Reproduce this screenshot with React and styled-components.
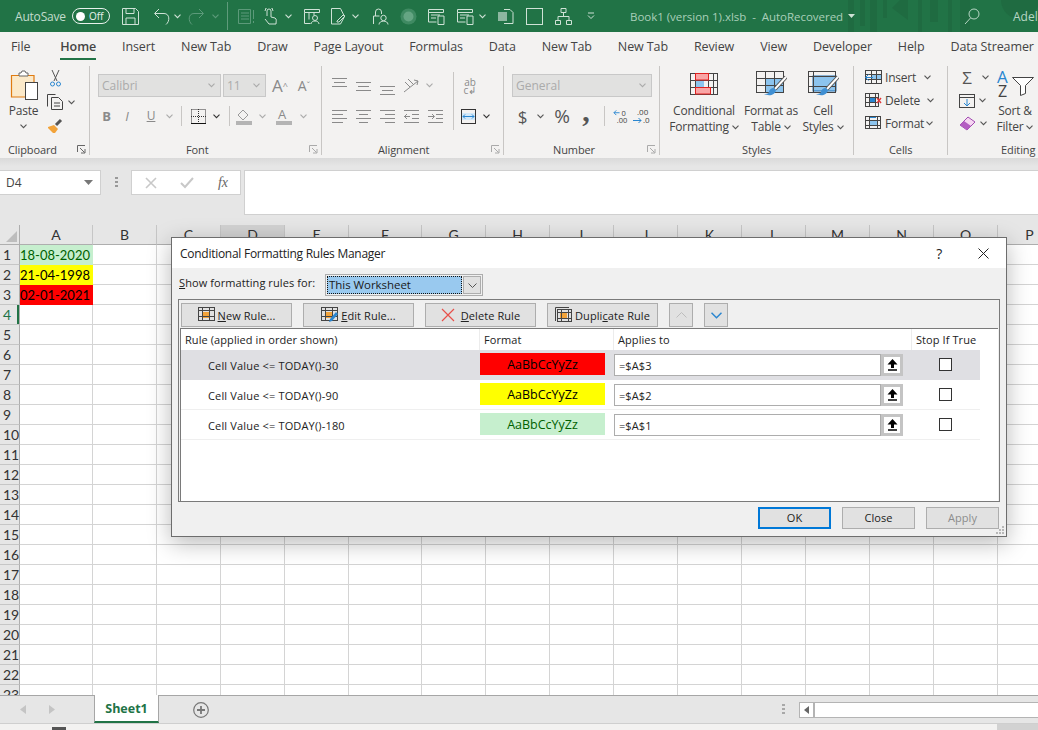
import React from 'react';
import styled, { createGlobalStyle } from 'styled-components';

const Global = createGlobalStyle`
  html, body { margin: 0; padding: 0; background: #fff; }
  #root { width: 1038px; height: 730px; }
  * { box-sizing: border-box; }
`;
const UI = `"Open Sans", "Noto Sans", sans-serif`;

const App_ = styled.div`
  position: relative; width: 1038px; height: 730px; overflow: hidden;
  display: flex; flex-direction: column; font-family: ${UI}; color: #333;
`;
/* ---------- title bar ---------- */
const TitleBar = styled.header`
  position: relative; height: 32px; flex: none; background: #217346; display: flex; align-items: center; padding-left: 15px; overflow: hidden;
`;
const Decor = styled.svg`position: absolute; right: 0; top: 0;`;
const AutoLabel = styled.span`width: 57px; font-size: 12px; letter-spacing: -.2px; color: #c3dccd;`;
const Toggle = styled.div`
  width: 38px; height: 16px; border: 1px solid #e8f1ec; border-radius: 8px; display: flex; align-items: center; gap: 4px; padding-left: 3px;
  color: #e8f1ec; font-size: 10px;
  &::before { content: ""; width: 9px; height: 9px; border-radius: 50%; background: #fff; }
`;
const Slot = styled.span`
  flex: none; width: ${p => p.$w}px; display: flex; align-items: center; justify-content: center; position: relative; z-index: 1;
`;
const QatDivider = styled.span`width: 1px; height: 28px; background: #5f9b7b;`;
const DocTitle = styled.span`
  position: relative; z-index: 1; margin-left: 30px; width: 225px; white-space: nowrap; font-size: 11.5px; letter-spacing: -.03px; color: #a9cfb9; display: flex; align-items: center; gap: 5px;
`;
const User = styled.span`position: relative; z-index: 1; font-size: 12px; color: #b7d6c4; margin-left: 33px; white-space: nowrap;`;
/* ---------- tabs ---------- */
const TabRow = styled.nav`
  height: 28px; flex: none; background: #f3f2f1; display: flex; gap: 25.95px; padding-left: 11px; align-items: stretch; white-space: nowrap; overflow: hidden;
`;
const Tab = styled.span`
  font-size: 12.5px; letter-spacing: -.1px; line-height: 30px; color: #444; position: relative; font-weight: ${p => p.$on ? 600 : 400};
  ${p => p.$on ? `margin-left: 4px; &::after { content: ""; position: absolute; left: 0; right: 0; bottom: -1px; height: 3px; background: #217346; }` : ''}
`;
/* ---------- ribbon ---------- */
const Ribbon = styled.section`
  height: 98px; flex: none; background: #f3f2f1; display: flex; padding-top: 6px; overflow: hidden;
`;
const Group = styled.div`
  flex: none; width: ${p => p.$w}px; height: 89px; display: flex; flex-direction: column; ${p => p.$last ? '' : 'border-right: 1px solid #c8c6c4;'}
  position: relative;
`;
const GroupBody = styled.div`
  height: 74px; flex: none; display: flex; padding-left: ${p => p.$pl || 0}px; padding-top: ${p => p.$pt || 0}px; flex-direction: ${p => p.$col ? 'column' : 'row'};
  gap: ${p => p.$gap || 0}px; white-space: nowrap;
`;
const LabelRow = styled.div`
  height: 14px; flex: none; margin-top: 2px; display: flex; align-items: center; padding-left: ${p => p.$pl}px; font-size: 11px; letter-spacing: -.1px; color: #444;
`;
const Launcher = styled.svg`margin-left: auto; margin-right: 3px;`;
const Row = styled.div`display: flex; align-items: center; height: ${p => p.$h || 18}px; flex: none;`;
const DisabledBox = styled.div`
  flex: none; width: ${p => p.$w}px; height: 23px; background: #e1e1e0; border: 1px solid #c8c8c8; display: flex; align-items: center; justify-content: space-between;
  padding: 0 5px 0 3px; color: #ababab; font-size: 12px; margin-right: ${p => p.$mr || 0}px;
`;
const Glyph = styled.span`
  font-size: ${p => p.$s || 13}px; font-weight: ${p => p.$b ? 700 : 400}; font-style: ${p => p.$i ? 'italic' : 'normal'};
  color: ${p => p.$c || '#555'}; line-height: 1; font-family: ${p => p.$serif ? '"Liberation Serif", serif' : UI};
  text-decoration: ${p => p.$u ? 'underline' : 'none'}; margin-top: ${p => p.$mt || 0}px;
`;
const StackGlyph = styled(Glyph)`line-height: 8px; text-align: center;`;
const VRule = styled.span`
  width: 1px; height: ${p => p.$h || 20}px; background: #c8c6c4; flex: none; margin-top: ${p => p.$mt || 0}px; margin-left: ${p => p.$ml || 0}px;
`;
const BigCol = styled.div`
  flex: none; width: ${p => p.$w}px; display: flex; flex-direction: column; align-items: center; padding-top: ${p => p.$pt ?? 7}px;
`;
const BigIcon = styled.div`height: ${p => p.$h || 22}px; display: flex; align-items: center; justify-content: center;`;
const BigText = styled.div`
  margin-top: ${p => p.$mt ?? 8}px; font-size: 12px; letter-spacing: -.2px; line-height: 16px; color: #444; text-align: center; white-space: nowrap;
`;
const TextLine = styled.div`display: flex; align-items: center; justify-content: center; gap: 3px;`;
const CellLabel = styled.span`font-size: 12px; letter-spacing: -.2px; color: #444; width: ${p => p.$w}px; margin-left: 3px;`;
const ColStack = styled.div`display: flex; flex-direction: column; flex: none;`;
/* ---------- formula bar ---------- */
const FormulaBar = styled.section`
  height: 67px; flex: none; background: linear-gradient(#dadada, #e6e6e6 8px); display: flex; padding-top: 12px; align-items: flex-start;
`;
const NameBox = styled.div`
  width: 101px; height: 25px; background: #fff; border: 1px solid #d0d0d0; border-left: 0; display: flex; align-items: center; justify-content: space-between; padding: 0 7px 0 6px; font-size: 12px; color: #444;
`;
const VDots = styled.div`width: 30px; height: 25px; display: flex; align-items: center; justify-content: center;`;
const FxBox = styled.div`
  width: 110px; height: 25px; background: #fff; border: 1px solid #d0d0d0; display: flex; align-items: center; margin-right: 3px;
`;
const FormulaInput = styled.div`flex: 1; height: 45px; background: #fff; border: 1px solid #d0d0d0; border-right: 0;`;
/* ---------- grid ---------- */
const Sheet = styled.main`
  height: 471px; flex: none; overflow: hidden; display: grid; background: #fff;
  grid-template-columns: 20px 73px 64px 64px 64px 64px 73px repeat(9, 64px) 64px;
  grid-auto-rows: 20px; font-family: "Lato", sans-serif;
`;
const Corner = styled.div`
  background: #e6e6e6; border-right: 1px solid #aeaeae; border-bottom: 1px solid #aeaeae; position: relative;
  &::after { content: ""; position: absolute; right: 2px; bottom: 2px; border-left: 11px solid transparent; border-bottom: 11px solid #bdbdbd; }
`;
const ColHead = styled.div`
  background: ${p => p.$on ? '#d2d2d2' : '#e6e6e6'}; border-right: 1px solid #c6c6c6; border-bottom: 1px solid #aeaeae; font-size: 14px; color: #333; text-align: center; line-height: 20px;
`;
const RowHead = styled.div`
  background: #e6e6e6; border-right: 1px solid #aeaeae; border-bottom: 1px solid #c6c6c6; font-size: 14px; color: ${p => p.$on ? '#217346' : '#333'}; line-height: 20px; padding-left: 3px;
  ${p => p.$on ? 'box-shadow: inset -2px 0 #217346;' : ''}
`;
const Cell = styled.div`
  background: ${p => p.$bg || '#fff'}; color: ${p => p.$fg || '#000'}; border-right: 1px solid ${p => p.$bg || '#d4d4d4'}; border-bottom: 1px solid ${p => p.$bg || '#d4d4d4'};
  font-size: 13px; line-height: 20px; text-align: right; padding-right: 2px; white-space: nowrap;
`;
/* ---------- bottom ---------- */
const TabsBar = styled.section`
  height: 29px; flex: none; background: #e6e6e6; border-top: 1px solid #a6a6a6; border-bottom: 1px solid #cfcfcf; display: flex; align-items: stretch; margin-top: -1px; position: relative; z-index: 2;
`;
const SheetTab = styled.div`
  width: 65px; margin-top: -1px; background: #fff; border-left: 1px solid #a6a6a6; border-right: 1px solid #a6a6a6; border-bottom: 2px solid #217346;
  color: #217346; font-weight: 700; font-size: 12.5px; text-align: center; line-height: 27px;
`;
const ScrollTrack = styled.div`
  margin-top: 6px; height: 16px; flex: 1; background: #fff; border: 1px solid #b4b4b4; border-right: 0; display: flex;
`;
const ScrollBtn = styled.div`width: 15px; border-right: 2px solid #b4b4b4; display: flex; align-items: center; justify-content: center;`;
const Status = styled.footer`flex: 1; background: #f3f2f1; display: flex; justify-content: space-between; padding-left: 52px;`;
const StatusGlyph = styled.div`width: 14px; height: 3px; margin-top: 3px; background: #555;`;
const StatusOn = styled.div`width: 41px; background: #d2d2d2;`;
/* ---------- dialog ---------- */
const Dialog = styled.section`
  position: absolute; left: 171px; top: 237px; width: 836px; height: 300px; z-index: 5; background: #f0f0f0; border: 1px solid #6d6d6d;
  box-shadow: 0 6px 22px rgba(0,0,0,.28); display: flex; flex-direction: column; color: #222; font-size: 11px; letter-spacing: .08px;
`;
const DlgTitle = styled.div`
  height: 30px; flex: none; background: #fff; display: flex; align-items: center; padding-left: 8px; font-size: 12px; color: #222; letter-spacing: -.27px;
`;
const DlgHelp = styled.span`margin-left: auto; font-size: 14px; margin-right: 36px;`;
const DlgClose = styled.svg`margin-right: 17px;`;
const DlgBody = styled.div`flex: 1; padding: 0 6px; display: flex; flex-direction: column; min-height: 0;`;
const ShowRow = styled.div`height: 31px; flex: none; display: flex; align-items: center; padding-left: 1px; padding-top: 3px;`;
const ShowLabel = styled.span`width: 146px; margin-top: -5px;`;
const U = styled.span`text-decoration: underline;`;
const Select = styled.div`
  width: 158px; height: 22px; border: 1px solid #adadad; padding: 1px; display: flex; background: #f0f0f0;
`;
const SelectValue = styled.div`
  flex: 1; background: #99c9ef; border: 1px dotted #111; font-size: 11.5px; line-height: 15px; letter-spacing: -.05px; padding-left: 1px; color: #1a1a1a;
`;
const SelectBtn = styled.div`width: 18px; margin-left: 1px; background: #e1e1e1; border: 1px solid #adadad; display: flex; align-items: center; justify-content: center;`;
const Panel = styled.div`
  height: 203px; flex: none; border: 1px solid #7a7a7a; padding: 3px 1px 0 1px; display: flex; flex-direction: column;
`;
const Tools = styled.div`display: flex; gap: 11px; padding-left: 1px; height: 25px; flex: none;`;
const ToolBtn = styled.div`
  width: ${p => p.$w || 111}px; height: 24px; background: #e1e1e1; border: 1px solid #adadad; display: flex; align-items: center; justify-content: center; gap: 3px; white-space: nowrap; color: #222;
`;
const DelLabel = styled.span`margin-left: 3px;`;
const List = styled.div`flex: 1; background: #fff; border-top: 1px solid #7a7a7a; border-left: 1px solid #7a7a7a;`;
const ListGrid = styled.div`width: 799px; display: grid; grid-template-columns: 299px 134px 298px 68px;`;
const Th = styled.div`
  height: 21px; line-height: 21px; padding-left: ${p => p.$pl ?? 4}px; border-right: ${p => p.$nr ? 0 : '1px solid #ececec'}; white-space: nowrap; color: #222;
`;
const Td = styled.div`
  height: 30px; display: flex; align-items: center; background: ${p => p.$sel ? '#dfdfe3' : '#fff'}; border-bottom: 1px solid ${p => p.$sel ? '#dfdfe3' : '#efefef'};
  padding-left: ${p => p.$pl || 0}px; white-space: nowrap; letter-spacing: ${p => p.$pl ? '.16px' : 'inherit'};
  padding-top: ${p => p.$pl ? 1 : 0}px;
`;
const Swatch = styled.div`
  width: 125px; height: 22px; background: ${p => p.$bg}; color: ${p => p.$fg}; font-size: 12.5px; letter-spacing: 0; line-height: 24px; text-align: center; margin-bottom: 1px;
`;
const RefWrap = styled.div`width: 289px; height: 22px; display: flex;`;
const RefInput = styled.div`flex: 1; background: #fff; border: 1px solid #adadad; padding-left: 4px; line-height: 21px;`;
const RefBtn = styled.div`width: 22px; background: #fff; border: 3px solid #c4c4c4; display: flex; align-items: center; justify-content: center;`;
const Check = styled.div`width: 13px; height: 13px; background: #fff; border: 1px solid #333; margin-left: 27px; margin-bottom: 1px;`;
const Foot = styled.div`flex: 1; display: flex; justify-content: flex-end; gap: 11px; padding: 5px 1px 0 0;`;
const FootBtn = styled.div`
  width: 73px; height: 22px; background: #e1e1e1; text-align: center; font-size: 11px; line-height: ${p => p.$def ? 18 : 20}px; color: ${p => p.$off ? '#8c8c8c' : '#222'};
  border: ${p => p.$def ? '2px solid #0078d7' : '1px solid #adadad'};
`;
const Grip = styled.svg`position: absolute; right: 1px; bottom: 1px;`;

/* ---------- icons ---------- */
const Chev = ({ c = '#555' }) => <svg width="7" height="5" viewBox="0 0 7 5"><path d="M.5 .7 3.5 3.7 6.5 .7" fill="none" stroke={c} strokeWidth="1.1" /></svg>;
const Qat = ({ w = 17, h = 17, c = '#cfe2d6', children }) => <svg width={w} height={h} viewBox={`0 0 ${w} ${h}`} fill="none" stroke={c} strokeWidth="1">{children}</svg>;
const QC = '#cfe2d6', QD = '#5c9a7a';

const LaunchIco = ({ c = '#666' }) => (
  <Launcher width="9" height="9" viewBox="0 0 9 9" fill="none" stroke={c}><path d="M.5 7V.5H8M3 3l4.500 4.500M4 8h4V4" /></Launcher>
);
const Lines = ({ kind = 'left' }) => {
  const rows = [[1.5, 0], [5.5, 1], [9.5, 0], [13.5, 1]];
  return (
    <svg width="15" height="15" viewBox="0 0 15 15" stroke="#8a8a8a">
      {rows.map(([y, odd], i) => {
        const l = odd ? 3 : 0, r = odd ? 12 : 15;
        return <path key={i} d={`M${kind === 'right' ? (odd ? 5 : 0) : kind === 'center' ? l : 0} ${y}H${kind === 'left' ? (odd ? 11 : 15) : kind === 'center' ? r : 15}`} />;
      })}
    </svg>
  );
};
const VAlign = ({ pos }) => {
  const off = pos === 'top' ? 0 : pos === 'mid' ? 4 : 8;
  return <svg width="15" height="18" viewBox="0 0 15 18" stroke="#8a8a8a"><path d={`M0 ${off + 1.5}H15M2 ${off + 5.5}H13M0 ${off + 9.5}H15`} /></svg>;
};
const GridOutline = ({ w, h, xs, ys, c = '#444' }) => (
  <g stroke={c} fill="none">
    <rect x=".5" y=".5" width={w - 1} height={h - 1} />
    {xs.map(x => <path key={x} d={`M${x}.5 0V${h}`} />)}
    {ys.map(y => <path key={y} d={`M0 ${y}.5H${w}`} />)}
  </g>
);
const Brush = () => (
  <g>
    <path d="M30 6 19 18" stroke="#555" strokeWidth="4" />
    <path d="M30 6 19 18" stroke="#fff" strokeWidth="2" />
    <path d="M18 17c-3 0-5 2-5 4-1 2-3 2-5 2 4 2 11 2 12-4z" fill="#3f8fd2" />
  </g>
);
const Paste = () => (
  <svg width="28" height="31" viewBox="0 0 28 31" fill="none">
    <path d="M1.500 5.500H24V27H1.500z" fill="#fbe9c9" stroke="#e07b10" strokeWidth="1.200" />
    <path d="M9 5.500V3h2l1-2h3l1 2h2v3H9z" fill="#fff" stroke="#666" />
    <rect x="15.500" y="12.500" width="12" height="17" fill="#fff" stroke="#444" />
  </svg>
);
const CondIco = () => (
  <svg width="28" height="22" viewBox="0 0 28 22">
    <rect x="5" y="7" width="9" height="7" fill="#8cc4ee" />
    <GridOutline w={28} h={22} xs={[5, 18, 23]} ys={[7, 14]} />
    <rect x="5.500" y=".5" width="13" height="6.500" fill="#f9a5a5" stroke="#e02020" />
    <rect x="5.500" y="14.500" width="15" height="6.500" fill="#f9a5a5" stroke="#e02020" />
  </svg>
);
const TableIco = () => (
  <svg width="31" height="26" viewBox="0 0 31 26">
    <rect x="10" y="7" width="17" height="15" fill="#8cc4ee" />
    <GridOutline w={28} h={22} xs={[9, 18]} ys={[7, 14]} />
    <Brush />
  </svg>
);
const CellStyleIco = () => (
  <svg width="31" height="26" viewBox="0 0 31 26">
    <rect x="5" y="5" width="23" height="15" fill="#8cc4ee" stroke="#2272b6" />
    <GridOutline w={28} h={22} xs={[5]} ys={[5, 15]} />
    <Brush />
  </svg>
);
const CellIco = ({ kind }) => (
  <svg width="17" height="15" viewBox="0 0 17 15">
    {kind === 'ins' && <>
      <rect x="6" y="5" width="10" height="5" fill="#8cc4ee" />
      <GridOutline w={17} h={14} xs={[6, 11]} ys={[4, 9]} />
      <path d="M8 7.500H.8M3.500 4.500l-3 3 3 3" stroke="#2a86d0" fill="none" />
    </>}
    {kind === 'del' && <>
      <rect x="5" y="5" width="6" height="5" fill="#2a86d0" />
      <GridOutline w={14} h={14} xs={[4, 10]} ys={[4, 9]} />
      <path d="M12 5l4 5m0-5-4 5" stroke="#e03838" strokeWidth="1.400" />
    </>}
    {kind === 'fmt' && <>
      <rect x="5" y="5" width="7" height="5" fill="#8cc4ee" />
      <GridOutline w={16} h={13} xs={[4, 12]} ys={[4, 9]} />
      <path d="M5 1.500H11" stroke="#2a86d0" />
    </>}
  </svg>
);
const FillDown = () => (
  <svg width="16" height="14" viewBox="0 0 16 14" fill="none"><rect x=".5" y=".5" width="15" height="13" stroke="#444" /><path d="M0 3.500H16" stroke="#444" /><path d="M8 5v7M5 9l3 3 3-3" stroke="#2a86d0" /></svg>
);
const Eraser = () => (
  <svg width="17" height="15" viewBox="0 0 17 15"><path d="M1 9 9 1l7 5-8 8z" fill="#f6d6f2" stroke="#a04bb0" /><path d="M1 9l4-4 7 5-4 4z" fill="#b45cc2" /></svg>
);
const SortIco = () => (
  <svg width="40" height="28" viewBox="0 0 40 28">
    <text x="2" y="14" fontFamily="Open Sans" fontSize="17" fill="#2a86d0">A</text>
    <text x="3" y="28" fontFamily="Open Sans" fontSize="16" fill="#444">Z</text>
    <path d="M17.500 8.500h21l-8 8v8l-5 2v-10z" fill="#fff" stroke="#444" />
  </svg>
);
const RuleIco = ({ kind }) => (
  <svg width="17" height="17" viewBox="0 0 17 17">
    <rect x="5" y="5" width="7" height="6" fill="#f2a33a" />
    {kind === 'dup' && <path d="M.5 14V.5H14" stroke="#444" fill="none" />}
    <g transform={kind === 'dup' ? 'translate(2 2)' : ''}>
      <GridOutline w={kind === 'dup' ? 15 : 17} h={kind === 'dup' ? 13 : 14} xs={[4, 11]} ys={[3, 9]} />
    </g>
    {kind === 'edit' && <path d="M8 15l1-3 6-7 2 2-6 7z" fill="#2a86d0" />}
  </svg>
);

const cols = ['A','B','C','D','E','F','G','H','I','J','K','L','M','N','O','P'];
const data = { 1: ['18-08-2020', '#c6efce', '#006100'], 2: ['21-04-1998', '#ffff00', '#000'], 3: ['02-01-2021', '#ff0000', '#000'] };
const rules = [
  ['Cell Value <= TODAY()-30', '#ff0000', '#000', '=$A$3', true],
  ['Cell Value <= TODAY()-90', '#ffff00', '#000', '=$A$2', false],
  ['Cell Value <= TODAY()-180', '#c6efce', '#006100', '=$A$1', false],
];
const tabs = ['File','Home','Insert','New Tab','Draw','Page Layout','Formulas','Data','New Tab','New Tab','Review','View','Developer','Help','Data Streamer'];

const UpArrow = () => <svg width="11" height="13" viewBox="0 0 11 13"><path d="M5.500 1 10.500 6.500H7V10H4V6.500H.5z" fill="#000" /><path d="M1 12h9" stroke="#000" strokeWidth="1.500" /></svg>;

export default function App() {
  return (
    <App_>
      <Global />
      <TitleBar>
        <Decor width="190" height="32" viewBox="0 0 190 32" fill="#1f6b41">
          <path d="M0 0h6v32H0zM12 0h5v26h-5zM22 0h7v32h-7zM35 0h4v18h-4zM44 8l8-8h8v20zM70 0h4v32h-4zM82 0h8v22h-8zM100 0h4v32h-4zM112 0h10v32h-10z" />
          <circle cx="172" cy="0" r="19" />
        </Decor>
        <AutoLabel>AutoSave</AutoLabel>
        <Toggle>Off</Toggle>
        <Slot $w={41}><Qat><path d="M.5.5h13l3 3v13H.5zM4 .5v5h8v-5M4 16.500V10h9v6.500" /></Qat></Slot>
        <Slot $w={22}><Qat w={19}><path d="M6 1 1.500 5.500 6 10M2 5.500h9c6 0 6 8 2 11" /></Qat></Slot>
        <Slot $w={8}><Chev c={QC} /></Slot>
        <Slot $w={28}><Qat w={19} c={QD}><path d="M13 1l4.500 4.500L13 10M17 5.500H8c-6 0-6 8-2 11" /></Qat></Slot>
        <Slot $w={12}><Chev c={QD} /></Slot>
        <Slot $w={12}><QatDivider /></Slot>
        <Slot $w={26}><Qat c={QD}><path d="M.5 1.500h12v14H.5zM3 5h8M3 8h8M3 11h8M15.500 2v9M15.500 13v2" /></Qat></Slot>
        <Slot $w={24}><Qat><path d="M4 8V3a2 2 0 0 1 4 0v6l4 1c2 1 1 3 1 6H6L2 11M2 3a4 4 0 0 1 8 0" /></Qat></Slot>
        <Slot $w={10}><Chev c={QC} /></Slot>
        <Slot $w={38}><Qat><path d="M.5 1.500h15v3H.5zM.5 4.500v11h6M5 4.500v7M10 4.500v3" /><circle cx="11" cy="10" r="2.500" /><path d="M7 16c0-4 8-4 8 0" /></Qat></Slot>
        <Slot $w={15}><Qat w={15}><path d="M.5.5h9l4 8-4 7.500h-9zM6 13l6-6 2 1-6 6H6z" /></Qat></Slot>
        <Slot $w={18}><Chev c={QC} /></Slot>
        <Slot $w={32}><Qat><path d="M1.500 16V8h6M3.500 8V4a3 3 0 0 1 6 0v2" /><circle cx="11.500" cy="10" r="2.700" /><path d="M7 16.500c0-4.500 9-4.500 9 0" /></Qat></Slot>
        <Slot $w={24}><svg width="17" height="17" viewBox="0 0 17 17"><circle cx="8.500" cy="8.500" r="8" fill="#3f8a62" /><circle cx="8.500" cy="8.500" r="5" fill="#65a583" /></svg></Slot>
        <Slot $w={32}><Qat><path d="M.5 1.500h15v3H.5zM.5 4.500V14h8M3 7h9M3 10h5M10 8h6v8.500h-6z" /></Qat></Slot>
        <Slot $w={26}><Qat><path d="M.5 1.500h15v3H.5zM.5 4.500V14h8M3 7h9M3 10h5M10 8h6v8.500h-6z" /></Qat></Slot>
        <Slot $w={8}><Chev c={QC} /></Slot>
        <Slot $w={38}><svg width="17" height="17" viewBox="0 0 17 17"><rect x="1" y="4" width="9" height="9" fill="#8db7a0" /><path d="M7 1.500h6l3 3v11H7" fill="none" stroke={QC} /></svg></Slot>
        <Slot $w={20}><Qat><rect x=".5" y=".5" width="16" height="16" /></Qat></Slot>
        <Slot $w={38}><Qat><path d="M6 .5h5v4H6zM.5 12.500h5v4h-5zM11.500 12.500h5v4h-5zM8.500 4.500v4M3 12.500v-4h11v4" /></Qat></Slot>
        <Slot $w={18}><svg width="8" height="8" viewBox="0 0 8 8" fill="none" stroke={QC}><path d="M1 1h6M1 3.500l3 3 3-3" /></svg></Slot>
        <DocTitle>Book1 (version 1).xlsb&nbsp; -&nbsp; AutoRecovered <svg width="7" height="4"><path d="M0 0h7L3.500 4z" fill="#cfe2d6" /></svg></DocTitle>
        <Slot $w={125}><svg style={{ marginLeft: 109 }} width="16" height="17" viewBox="0 0 16 17" fill="none" stroke="#b7d6c4"><circle cx="10" cy="6" r="5" /><path d="M6.500 10 1 16" /></svg></Slot>
        <User>Adel</User>
      </TitleBar>

      <TabRow>{tabs.map((t, i) => <Tab key={i} $on={t === 'Home'}>{t}</Tab>)}</TabRow>

      <Ribbon>
        <Group $w={90}>
          <GroupBody>
            <BigCol $w={47} $pt={4}>
              <BigIcon $h={31}><Paste /></BigIcon>
              <BigText $mt={2}>Paste</BigText>
              <Row $h={14}><Chev /></Row>
            </BigCol>
            <ColStack>
              <Row $h={24}><Slot $w={16}>
                <svg width="11" height="17" viewBox="0 0 11 17" fill="none"><path d="M2 0l5 11M9 0 4 11" stroke="#555" /><circle cx="2.500" cy="14" r="2" stroke="#2a86d0" /><circle cx="8.500" cy="14" r="2" stroke="#2a86d0" /></svg>
              </Slot></Row>
              <Row $h={24}><Slot $w={16}>
                <svg width="16" height="16" viewBox="0 0 16 16" fill="none" stroke="#444"><path d="M.5 12.500V.5h8M4.500 3.500h7l4 4v8h-11zM7 9h6M7 12h6" /></svg>
              </Slot><Slot $w={17}><Chev /></Slot></Row>
              <Row $h={24}><Slot $w={16}>
                <svg width="16" height="16" viewBox="0 0 16 16"><path d="M1 9l6-2 4 4-3 4H6L1 10z" fill="#f2a33a" /><path d="M9 7l5-5" stroke="#555" strokeWidth="3" /></svg>
              </Slot></Row>
            </ColStack>
          </GroupBody>
          <LabelRow $pl={8}>Clipboard<LaunchIco /></LabelRow>
        </Group>

        <Group $w={232}>
          <GroupBody $col $pl={8} $pt={8} $gap={10}>
            <Row $h={23}>
              <DisabledBox $w={123} $mr={2}>Calibri<Chev c="#aaa" /></DisabledBox>
              <DisabledBox $w={43}>11<Chev c="#aaa" /></DisabledBox>
              <Slot $w={28}><Glyph $s={17} $c="#8a8a8a">A</Glyph><Glyph $s={9} $c="#8a8a8a">^</Glyph></Slot>
              <Slot $w={20}><Glyph $s={14} $c="#8a8a8a">A</Glyph><Glyph $s={9} $c="#8a8a8a">ˇ</Glyph></Slot>
            </Row>
            <Row $h={18}>
              <Slot $w={17}><Glyph $b $s={13} $c="#8a8a8a">B</Glyph></Slot>
              <Slot $w={24}><Glyph $i $s={13} $c="#8a8a8a">I</Glyph></Slot>
              <Slot $w={24}><Glyph $u $s={12} $c="#8a8a8a">U</Glyph></Slot>
              <Slot $w={12}><Chev c="#aaa" /></Slot>
              <Slot $w={13}><VRule /></Slot>
              <Slot $w={20}><svg width="15" height="15" viewBox="0 0 15 15" fill="none"><path d="M.5.5h14v14M.5.5v14M7.500 0v14M0 7.500h15" stroke="#333" strokeDasharray="1 1" /><path d="M0 14.500h15" stroke="#111" /></svg></Slot>
              <Slot $w={17}><Chev c="#333" /></Slot>
              <Slot $w={9}><VRule /></Slot>
              <Slot $w={20}><svg width="16" height="17" viewBox="0 0 16 17"><path d="M2 7l5-5 5 5-5 5z" fill="none" stroke="#9a9a9a" /><rect y="13" width="16" height="4" fill="#b4b4b4" /></svg></Slot>
              <Slot $w={16}><Chev c="#aaa" /></Slot>
              <Slot $w={28}><svg width="16" height="17" viewBox="0 0 16 17"><text x="2" y="11" fontSize="13" fontFamily="Open Sans" fill="#8a8a8a">A</text><rect y="13" width="16" height="4" fill="#b4b4b4" /></svg></Slot>
              <Slot $w={10}><Chev c="#aaa" /></Slot>
            </Row>
          </GroupBody>
          <LabelRow $pl={96}>Font<LaunchIco c="#aaa" /></LabelRow>
        </Group>

        <Group $w={182}>
          <GroupBody $col $pl={5} $pt={8} $gap={10}>
            <Row $h={23}>
              <Slot $w={24}><VAlign pos="top" /></Slot>
              <Slot $w={24}><VAlign pos="mid" /></Slot>
              <Slot $w={24}><VAlign pos="bot" /></Slot>
              <Slot $w={24}><svg width="17" height="17" viewBox="0 0 17 17" fill="none" stroke="#8a8a8a"><path d="M1 15 15 4M11 3l4 1-1 4M2 5l5 5M5 2l5 5" /></svg></Slot>
              <Slot $w={12}><Chev c="#aaa" /></Slot>
              <Slot $w={28}><VRule $h={58} $mt={31} $ml={8} /></Slot>
              <Slot $w={14}><StackGlyph $s={10} $c="#8a8a8a">ab<br />c↲</StackGlyph></Slot>
            </Row>
            <Row $h={18}>
              <Slot $w={24}><Lines kind="left" /></Slot>
              <Slot $w={24}><Lines kind="center" /></Slot>
              <Slot $w={24}><Lines kind="right" /></Slot>
              <Slot $w={24}><svg width="15" height="13" viewBox="0 0 15 13" stroke="#8a8a8a" fill="none"><path d="M0 .5h15M8 4.500h7M8 8.500h7M0 12.500h15M6 6.500H0M3 4 .5 6.500 3 9" /></svg></Slot>
              <Slot $w={24}><svg width="15" height="13" viewBox="0 0 15 13" stroke="#8a8a8a" fill="none"><path d="M0 .5h15M8 4.500h7M8 8.500h7M0 12.500h15M0 6.500h6M4 4l2.500 2.500L4 9" /></svg></Slot>
              <Slot $w={14} />
              <Slot $w={15}><svg width="15" height="15" viewBox="0 0 15 15" fill="none"><rect x=".5" y=".5" width="14" height="14" stroke="#333" /><rect x="1" y="4" width="13" height="7" fill="#d2e8f8" /><path d="M2 7.500h11M4 5.500l-2 2 2 2M11 5.500l2 2-2 2" stroke="#2a86d0" /></svg></Slot>
              <Slot $w={20}><Chev c="#333" /></Slot>
            </Row>
          </GroupBody>
          <LabelRow $pl={56}>Alignment<LaunchIco c="#aaa" /></LabelRow>
        </Group>

        <Group $w={156}>
          <GroupBody $col $pl={8} $pt={8} $gap={10}>
            <Row $h={23}><DisabledBox $w={140}>General<Chev c="#aaa" /></DisabledBox></Row>
            <Row $h={18}>
              <Slot $w={21}><Glyph $s={17}>$</Glyph></Slot>
              <Slot $w={15}><Chev /></Slot>
              <Slot $w={28}><Glyph $s={19}>%</Glyph></Slot>
              <Slot $w={20}><Glyph $s={30} $b $serif $mt={-10}>,</Glyph></Slot>
              <Slot $w={17}><VRule /></Slot>
              <Slot $w={16}><svg width="17" height="15" viewBox="0 0 17 15"><path d="M7 3.500H1M3.500 1 1 3.500 3.500 6" stroke="#2a86d0" fill="none" /><text x="9" y="7" fontSize="8" fontFamily="Open Sans" fill="#444">0</text><text x="4" y="14" fontSize="8" fontFamily="Open Sans" fill="#444">.00</text></svg></Slot>
              <Slot $w={25}><svg width="17" height="15" viewBox="0 0 17 15"><text x="4" y="6" fontSize="8" fontFamily="Open Sans" fill="#444">.00</text><text x="10" y="14" fontSize="8" fontFamily="Open Sans" fill="#444">.0</text><path d="M0 11.500h8M5.500 9 8 11.500 5.500 14" stroke="#2a86d0" fill="none" /></svg></Slot>
            </Row>
          </GroupBody>
          <LabelRow $pl={49}>Number<LaunchIco c="#aaa" /></LabelRow>
        </Group>

        <Group $w={194}>
          <GroupBody $pl={6}>
            <BigCol $w={76}><BigIcon><CondIco /></BigIcon><BigText>Conditional<TextLine>Formatting <Chev /></TextLine></BigText></BigCol>
            <BigCol $w={58}><BigIcon><TableIco /></BigIcon><BigText>Format as<TextLine>Table <Chev /></TextLine></BigText></BigCol>
            <BigCol $w={46}><BigIcon><CellStyleIco /></BigIcon><BigText>Cell<TextLine>Styles <Chev /></TextLine></BigText></BigCol>
          </GroupBody>
          <LabelRow $pl={82}>Styles</LabelRow>
        </Group>

        <Group $w={94}>
          <GroupBody $col $pl={11}>
            <Row $h={23}><CellIco kind="ins" /><CellLabel $w={39}>Insert</CellLabel><Chev /></Row>
            <Row $h={23}><CellIco kind="del" /><CellLabel $w={42}>Delete</CellLabel><Chev /></Row>
            <Row $h={23}><CellIco kind="fmt" /><CellLabel $w={41}>Format</CellLabel><Chev /></Row>
          </GroupBody>
          <LabelRow $pl={35}>Cells</LabelRow>
        </Group>

        <Group $w={110} $last>
          <GroupBody $pl={11}>
            <ColStack>
              <Row $h={23}><Slot $w={16}><Glyph $s={17}>Σ</Glyph></Slot><Slot $w={20}><Chev /></Slot></Row>
              <Row $h={23}><FillDown /><Slot $w={14}><Chev /></Slot></Row>
              <Row $h={23}><Eraser /><Slot $w={14}><Chev /></Slot></Row>
            </ColStack>
            <BigCol $w={40} $pt={3}>
              <BigIcon $h={28}><SortIco /></BigIcon>
              <BigText $mt={6}>Sort &amp;<TextLine>Filter <Chev /></TextLine></BigText>
            </BigCol>
          </GroupBody>
          <LabelRow $pl={53}>Editing</LabelRow>
        </Group>
      </Ribbon>

      <FormulaBar>
        <NameBox>D4<svg width="9" height="5"><path d="M0 0h9L4.500 5z" fill="#777" /></svg></NameBox>
        <VDots><svg width="3" height="11" fill="#999"><rect width="3" height="2" /><rect y="4" width="3" height="2" /><rect y="8" width="3" height="2" /></svg></VDots>
        <FxBox>
          <Slot $w={37}><svg width="12" height="12" fill="none" stroke="#c8c8c8" strokeWidth="1.600"><path d="M1 1l10 10M11 1 1 11" /></svg></Slot>
          <Slot $w={36}><svg width="14" height="12" fill="none" stroke="#c8c8c8" strokeWidth="2"><path d="M1 6l4 4 8-9" /></svg></Slot>
          <Slot $w={36}><Glyph $serif $i $s={14} $c="#666">fx</Glyph></Slot>
        </FxBox>
        <FormulaInput />
      </FormulaBar>

      <Sheet>
        <Corner />
        {cols.map(c => <ColHead key={c} $on={c === 'D'}>{c}</ColHead>)}
        {Array.from({ length: 23 }, (_, r) => r + 1).map(r => (
          <React.Fragment key={r}>
            <RowHead $on={r === 4}>{r}</RowHead>
            {cols.map((c, i) => {
              const d = i === 0 && data[r];
              return <Cell key={c} $bg={d ? d[1] : undefined} $fg={d ? d[2] : undefined}>{d ? d[0] : ''}</Cell>;
            })}
          </React.Fragment>
        ))}
      </Sheet>

      <TabsBar>
        <Slot $w={46}><svg width="6" height="9"><path d="M6 0v9L0 4.500z" fill="#c4c4c4" /></svg></Slot>
        <Slot $w={12}><svg width="6" height="9"><path d="M0 0v9l6-4.500z" fill="#c4c4c4" /></svg></Slot>
        <Slot $w={36} />
        <SheetTab>Sheet1</SheetTab>
        <Slot $w={83}><svg width="16" height="16" viewBox="0 0 16 16" fill="none" stroke="#777" strokeWidth="1.200"><circle cx="8" cy="8" r="7.300" /><path d="M8 4v8M4 8h8" strokeWidth="1.800" /></svg></Slot>
        <Slot $w={557}><svg width="3" height="11" fill="#a8a8a8" style={{ marginLeft: 526 }}><rect width="3" height="2" /><rect y="4" width="3" height="2" /><rect y="8" width="3" height="2" /></svg></Slot>
        <ScrollTrack><ScrollBtn><svg width="5" height="8"><path d="M5 0v8L0 4z" fill="#666" /></svg></ScrollBtn></ScrollTrack>
      </TabsBar>
      <Status><StatusGlyph /><StatusOn /></Status>

      <Dialog>
        <DlgTitle>
          Conditional Formatting Rules Manager
          <DlgHelp>?</DlgHelp>
          <DlgClose width="11" height="11" fill="none" stroke="#222"><path d="M.5.5l10 10M10.500.5l-10 10" /></DlgClose>
        </DlgTitle>
        <DlgBody>
          <ShowRow>
            <ShowLabel><U>S</U>how formatting rules for:</ShowLabel>
            <Select>
              <SelectValue>This Worksheet</SelectValue>
              <SelectBtn><svg width="9" height="5" fill="none" stroke="#555"><path d="M.5.5l4 4 4-4" /></svg></SelectBtn>
            </Select>
          </ShowRow>
          <Panel>
            <Tools>
              <ToolBtn><RuleIco /><span><U>N</U>ew Rule...</span></ToolBtn>
              <ToolBtn><RuleIco kind="edit" /><span><U>E</U>dit Rule...</span></ToolBtn>
              <ToolBtn><svg width="14" height="14" fill="none" stroke="#e8504a" strokeWidth="1.200"><path d="M1 1l12 12M13 1 1 13" /></svg><DelLabel><U>D</U>elete Rule</DelLabel></ToolBtn>
              <ToolBtn><RuleIco kind="dup" /><span>Dupli<U>c</U>ate Rule</span></ToolBtn>
              <ToolBtn $w={24}><svg width="11" height="6" fill="none" stroke="#bdbdbd"><path d="M.5 5.500l5-5 5 5" /></svg></ToolBtn>
              <ToolBtn $w={24}><svg width="11" height="7" fill="none" stroke="#2a86d0" strokeWidth="1.500"><path d="M.5.8l5 5 5-5" /></svg></ToolBtn>
            </Tools>
            <List>
              <ListGrid>
                <Th>Rule (applied in order shown)</Th>
                <Th>Format</Th>
                <Th>Applies to</Th>
                <Th $nr>Stop If True</Th>
                {rules.map(([name, bg, fg, ref, sel]) => (
                  <React.Fragment key={ref}>
                    <Td $sel={sel} $pl={27}>{name}</Td>
                    <Td $sel={sel}><Swatch $bg={bg} $fg={fg}>AaBbCcYyZz</Swatch></Td>
                    <Td $sel={sel}><RefWrap><RefInput>{ref}</RefInput><RefBtn><UpArrow /></RefBtn></RefWrap></Td>
                    <Td $sel={sel}><Check /></Td>
                  </React.Fragment>
                ))}
              </ListGrid>
            </List>
          </Panel>
          <Foot>
            <FootBtn $def>OK</FootBtn>
            <FootBtn>Close</FootBtn>
            <FootBtn $off>Apply</FootBtn>
          </Foot>
        </DlgBody>
        <Grip width="10" height="10" fill="#b8b8b8"><rect x="7" y="1" width="2" height="2" /><rect x="4" y="4" width="2" height="2" /><rect x="7" y="4" width="2" height="2" /><rect x="1" y="7" width="2" height="2" /><rect x="4" y="7" width="2" height="2" /><rect x="7" y="7" width="2" height="2" /></Grip>
      </Dialog>
    </App_>
  );
}
